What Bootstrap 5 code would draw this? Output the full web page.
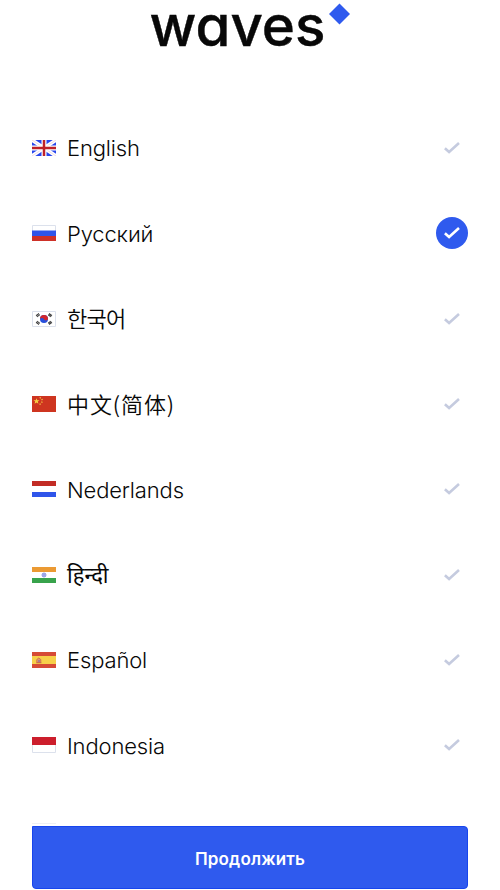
<!DOCTYPE html>
<html lang="ru">
<head>
<meta charset="utf-8">
<meta name="viewport" content="width=device-width, initial-scale=1">
<title>Waves</title>
<link href="https://cdn.jsdelivr.net/npm/bootstrap@5.3.0/dist/css/bootstrap.min.css" rel="stylesheet">
<style>
body{font-family:Inter,"Noto Sans CJK SC","Noto Sans",sans-serif;color:#080808;height:890px}
.brand-head{height:105.3px}
.brand-head svg{display:block;width:220px;height:60px}
.brand-word{font-family:Inter,sans-serif;font-size:56px;font-weight:500;font-feature-settings:"cv11","ss03";stroke:#080808;stroke-width:.4px}
.lang-row{height:85.35px;padding:0 32px}
.flag{width:24px;height:16px;flex:none;display:block}
.lang-name{font-size:22px;font-weight:350;line-height:32px;margin-left:11px;padding-top:.6px;letter-spacing:-.15px;white-space:nowrap}
.ko{font-family:"Noto Sans CJK KR",sans-serif;font-weight:350;padding:0 0 3px;letter-spacing:-.8px}
.zh{font-family:"Noto Sans CJK SC",sans-serif;font-weight:350;padding:0 0 3px;letter-spacing:.9px}
.hi{font-weight:400;padding:0;letter-spacing:0}
.tick{width:32px;height:32px;flex:none;color:#c5cbdf}
.tick.on{background:#2f5aee;color:#fff}
.next-row{height:37.9px;padding:0 32px 2px}
.next-edge{width:24px;height:1px;background:#eff0f4}
.go,.go:hover{height:63.5px;margin:0 32px;background:#2f5aee;color:#fff;border:1px solid #1745ee;border-radius:0 4px 4px 4px;font-size:17px;font-weight:600;letter-spacing:.15px}
</style>
<script src="https://cdn.jsdelivr.net/npm/bootstrap@5.3.0/dist/js/bootstrap.bundle.min.js"></script>
</head>
<body class="bg-white overflow-hidden">
<svg class="d-none"><symbol id="check" viewBox="0 0 32 32"><path d="M8.9 16.2 13.1 20 23 11" fill="none" stroke="currentColor" stroke-width="2.6"/></symbol></svg>
<main class="d-flex flex-column">
<header class="brand-head d-flex justify-content-center align-items-start">
<svg viewBox="140 0 220 60" role="img"><text class="brand-word" x="149.5" y="45.5" textLength="176" lengthAdjust="spacingAndGlyphs" fill="#080808">waves</text><path d="M339.5 3.5 350 14 339.5 24.5 329 14Z" fill="#2f5aee"/></svg>
</header>
<div class="lang-row d-flex align-items-center"><svg class="flag" viewBox="0 0 24 16"><path fill="#2846ec" d="M0 0h24v16H0z"/><path d="M0 0 24 16M24 0 0 16" stroke="#fff" stroke-width="3.6"/><path d="M0 0 24 16M24 0 0 16" stroke="#efc4ca" stroke-width=".6"/><path d="M12 0v16M0 8h24" stroke="#fff" stroke-width="5"/><path d="M12 0v16M0 8h24" stroke="#be2028" stroke-width="2.5"/></svg><span class="lang-name">English</span><span class="tick rounded-circle ms-auto"><svg class="d-block" width="32" height="32"><use href="#check"/></svg></span></div>
<div class="lang-row d-flex align-items-center"><svg class="flag" viewBox="0 0 24 16"><path fill="#fff" d="M0 0h24v16H0z"/><path d="M.5 6V.5h23V6" fill="none" stroke="#dce1ec"/><path fill="#2f55ea" d="M0 5.5h24v5.5H0z"/><path fill="#ce3128" d="M0 11h24v5H0z"/></svg><span class="lang-name">Русский</span><span class="tick on rounded-circle ms-auto"><svg class="d-block" width="32" height="32"><use href="#check"/></svg></span></div>
<div class="lang-row d-flex align-items-center"><svg class="flag" viewBox="0 0 24 16"><path fill="#fff" stroke="#dce1ec" d="M.5.5h23v15H.5z"/><circle cx="12" cy="8" r="4" fill="#2850dc"/><path d="M8 8a4 4 0 0 1 8 0c-1 2-3 1.8-4 .3S9 6.5 8 8" fill="#d1252d"/><g stroke="#333" stroke-width="2.8" stroke-dasharray="1 .3"><path d="m4.5 5.2 2.8-2M16.7 12.8l2.8-2M16.7 3.2l2.8 2M4.5 10.8l2.8 2"/></g></svg><span class="lang-name ko">한국어</span><span class="tick rounded-circle ms-auto"><svg class="d-block" width="32" height="32"><use href="#check"/></svg></span></div>
<div class="lang-row d-flex align-items-center"><svg class="flag" viewBox="0 0 24 16"><path fill="#ce3520" d="M0 0h24v16H0z"/><path fill="#f7d344" d="m4.5 2.2.8 2h2.2L5.8 5.6l.6 2.2-1.9-1.3-1.9 1.3.6-2.2-1.7-1.4h2.2z"/><path d="m7.7 1.4 1 .8M9.7 3.1l.7 1M10.2 5.6l-.6 1M8.6 7.8l-1 .7" stroke="#f7d344" stroke-width="1.2"/></svg><span class="lang-name zh">中文(简体)</span><span class="tick rounded-circle ms-auto"><svg class="d-block" width="32" height="32"><use href="#check"/></svg></span></div>
<div class="lang-row d-flex align-items-center"><svg class="flag" viewBox="0 0 24 16"><path fill="#fff" d="M0 0h24v16H0z"/><path fill="#c22c25" d="M0 0h24v5H0z"/><path fill="#2f55ea" d="M0 11h24v5H0z"/></svg><span class="lang-name">Nederlands</span><span class="tick rounded-circle ms-auto"><svg class="d-block" width="32" height="32"><use href="#check"/></svg></span></div>
<div class="lang-row d-flex align-items-center"><svg class="flag" viewBox="0 0 24 16"><path fill="#fff" d="M0 0h24v16H0z"/><path fill="#eb9a33" d="M0 0h24v5H0z"/><path fill="#38a34c" d="M0 11h24v5H0z"/><circle cx="12" cy="8" r="2" fill="#c5cbf5" stroke="#7280d8" stroke-width=".8"/><circle cx="12" cy="8" r=".7" fill="#5363d0"/></svg><span class="lang-name hi">हिन्दी</span><span class="tick rounded-circle ms-auto"><svg class="d-block" width="32" height="32"><use href="#check"/></svg></span></div>
<div class="lang-row d-flex align-items-center"><svg class="flag" viewBox="0 0 24 16"><path fill="#f7d049" d="M0 0h24v16H0z"/><path fill="#d64b36" d="M0 0h24v4H0zM0 12h24v4H0z"/><path d="M4.8 10.5V7.5l2-1.5 2 1.5v3zM4.2 10.8h5.3" fill="#e59a68" stroke="#c8664d" stroke-width=".8"/><path d="M6 8h2v2H6z" fill="#a97c91"/></svg><span class="lang-name">Español</span><span class="tick rounded-circle ms-auto"><svg class="d-block" width="32" height="32"><use href="#check"/></svg></span></div>
<div class="lang-row d-flex align-items-center"><svg class="flag" viewBox="0 0 24 16"><path fill="#fff" stroke="#dce1ec" d="M.5.5h23v15H.5z"/><path fill="#cc1e2c" d="M0 0h24v8H0z"/></svg><span class="lang-name">Indonesia</span><span class="tick rounded-circle ms-auto"><svg class="d-block" width="32" height="32"><use href="#check"/></svg></span></div>
<div class="next-row d-flex align-items-end"><span class="next-edge"></span></div>
<button class="go btn px-0 pb-0 pt-1" type="button">Продолжить</button>
</main>
</body>
</html>
